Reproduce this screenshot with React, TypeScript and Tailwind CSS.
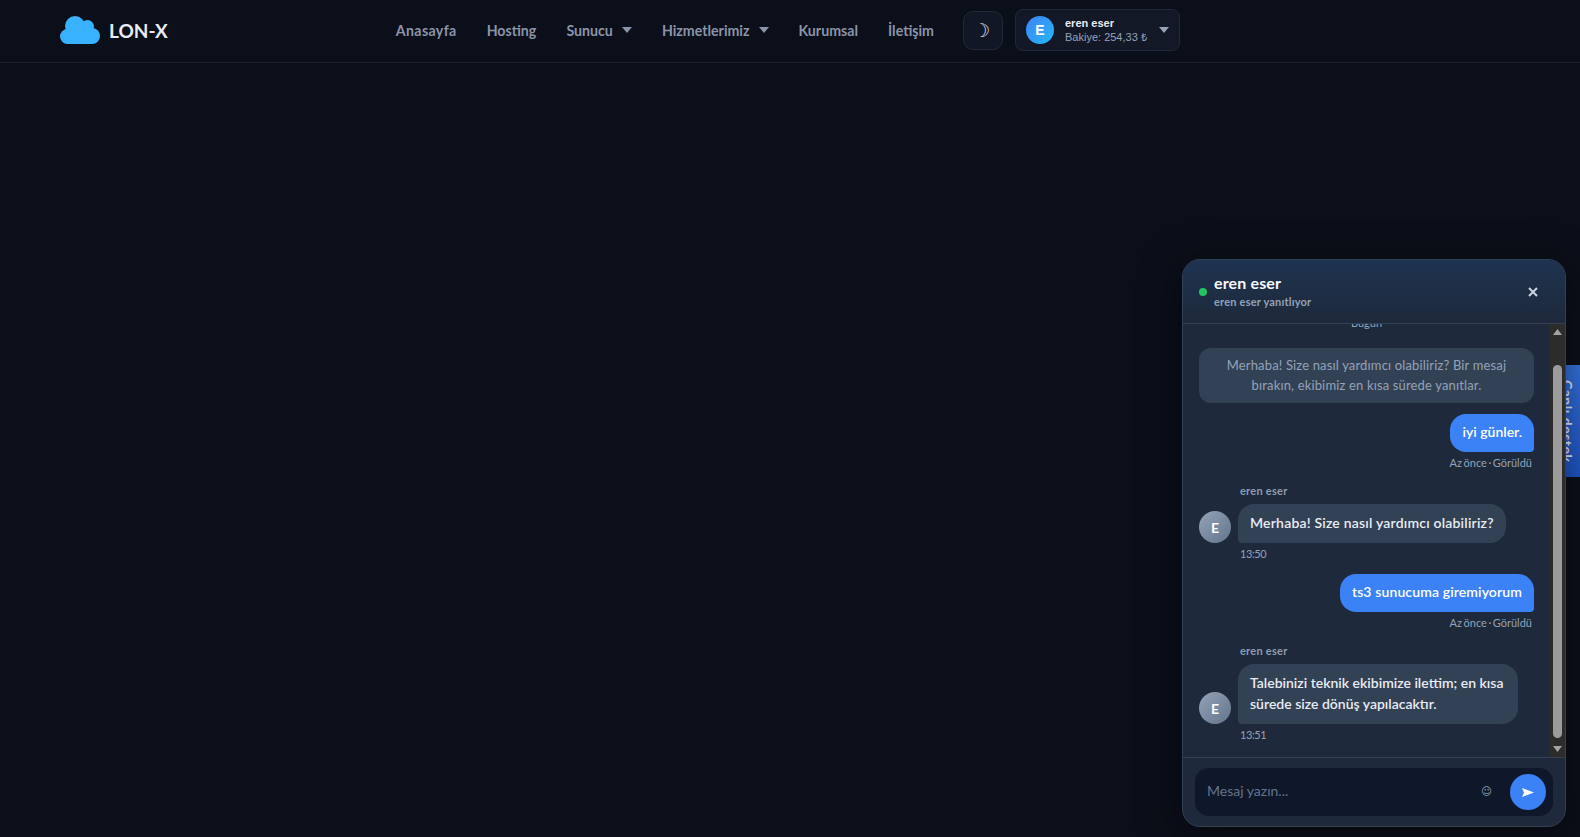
import React from 'react';

const font = "font-['Lato','Noto_Sans',sans-serif]";

function Caret({ className = '' }: { className?: string }) {
  return (
    <svg className={className} width="10" height="6" viewBox="0 0 10 6">
      <path d="M0 0h10L5 6z" fill="currentColor" />
    </svg>
  );
}

function CloudLogo() {
  return (
    <svg width="40" height="28" viewBox="0 0 40 28" fill="#38b2fe">
      <circle cx="15" cy="10" r="10" />
      <circle cx="27.5" cy="10.5" r="6.5" />
      <circle cx="7.5" cy="20.5" r="7.5" />
      <circle cx="32" cy="20" r="8" />
      <rect x="7" y="12" width="25" height="16" />
    </svg>
  );
}

const NAV = [
  { label: 'Anasayfa', spacing: 'tracking-[0.35px]' },
  { label: 'Hosting' },
  { label: 'Sunucu', caret: true },
  { label: 'Hizmetlerimiz', caret: true },
  { label: 'Kurumsal' },
  { label: 'İletişim' },
];

function Header() {
  return (
    <header className="h-[63px] border-b border-[#1b1f2a] bg-[#0b0f19]">
      <div className="flex h-[60px] w-[1180px] items-center justify-between pl-[60px]">
        <div className="flex items-center gap-[9px]">
          <CloudLogo />
          <span className="text-[19px] font-bold leading-none text-[#e8ecf4]">LON-X</span>
        </div>
        <div className="flex items-center">
          <nav className="flex items-center gap-[30px] pt-[1px] text-[14.2px] font-bold text-[#8a94a8]">
            {NAV.map((item) => (
              <span key={item.label} className={`flex items-center gap-[9px] ${item.spacing ?? ''}`}>
                {item.label}
                {item.caret && <Caret />}
              </span>
            ))}
          </nav>
          <button className="ml-[29px] flex h-[39px] w-[40px] items-center justify-center rounded-[10px] border border-[#232838] bg-[#121725] pr-[3px] font-['DejaVu_Sans'] text-[19px] text-[#d8dce4]">
            ☽
          </button>
          <button className="ml-[12px] flex h-[42px] w-[165px] items-center rounded-[8px] border border-[#232838] bg-[#131826] pl-[10px] pr-[10px] text-left font-['Liberation_Sans',sans-serif]">
            <span className="flex h-[28px] w-[28px] items-center justify-center rounded-full bg-gradient-to-br from-[#3b82f6] to-[#22b8f5] text-[14px] font-bold text-white">
              E
            </span>
            <span className="ml-[11px] flex flex-col leading-[14px]">
              <span className="text-[11px] font-bold text-[#e8ecf4]">eren eser</span>
              <span className="text-[11px] text-[#94a3b8]">Bakiye: 254,33 ₺</span>
            </span>
            <Caret className="ml-auto text-[#94a3b8]" />
          </button>
        </div>
      </div>
    </header>
  );
}

function Avatar() {
  return (
    <div className="flex h-[32px] w-[32px] shrink-0 items-center justify-center rounded-full bg-gradient-to-br from-[#94a3b8] to-[#64748b] text-[14px] font-bold text-white">
      E
    </div>
  );
}

function Mine({ text, spacing = '' }: { text: string; spacing?: string }) {
  return (
    <div className="mb-[15px] flex flex-col items-end">
      <div className={`${spacing} whitespace-nowrap rounded-[16px] rounded-br-[4px] bg-[#3b82f6] px-[12px] pb-[10px] pt-[8px] text-[14px] font-semibold leading-[20px] text-white`}>
        {text}
      </div>
      <div className="mt-[4px] pr-[2px] text-[11px] leading-[14px] text-[#94a3b8] [word-spacing:-1.3px]">Az önce · Görüldü</div>
    </div>
  );
}

function Theirs({ lines, time, spacing = 'pr-[12px]' }: { lines: string[]; time: string; spacing?: string }) {
  return (
    <div className="mb-[13px] flex flex-col">
      <div className="ml-[41px] -translate-y-[1px] text-[11px] font-bold leading-[14px] tracking-[0.25px] text-[#8f9bb0]">eren eser</div>
      <div className="mt-[5px] flex items-end gap-[7px]">
        <Avatar />
        <div className={`${spacing} rounded-[16px] rounded-bl-[4px] bg-[#334155] pb-[10px] pl-[12px] pt-[8px] text-[14px] font-semibold leading-[21px] text-[#e8ecf4]`}>
          {lines.map((l) => (
            <div key={l} className="whitespace-nowrap">{l}</div>
          ))}
        </div>
      </div>
      <div className="ml-[41px] mt-[4px] text-[11px] leading-[14px] tracking-[-0.4px] text-[#94a3b8]">{time}</div>
    </div>
  );
}

function Scrollbar() {
  return (
    <div className="flex w-[15px] shrink-0 flex-col items-center bg-[#2c2c2c] py-[5px]">
      <svg width="9" height="6" viewBox="0 0 9 6" fill="#a3a3a3"><path d="M4.5 0L9 6H0z" /></svg>
      <div className="mb-[8px] mt-[30px] w-[9px] flex-1 rounded-full bg-[#9c9c9c]" />
      <svg width="9" height="6" viewBox="0 0 9 6" fill="#a3a3a3"><path d="M0 0h9L4.500 6z" /></svg>
    </div>
  );
}

function ChatPanel() {
  return (
    <aside className="absolute bottom-[10px] right-[14px] z-10 flex h-[568px] w-[384px] flex-col overflow-hidden rounded-[18px] border border-[#334155] bg-[#1e293b] shadow-[0_10px_40px_rgba(0,0,0,0.5)]">
      <div className="flex h-[64px] shrink-0 items-center border-b border-[#334155] bg-gradient-to-b from-[#1e3350] to-[#1e293b] pl-[16px] pr-[27px]">
        <span className="h-[8px] w-[8px] rounded-full bg-[#22c55e]" />
        <div className="ml-[7px] flex flex-col">
          <span className="text-[16px] font-bold leading-[18px] tracking-[0.15px] text-[#f8fafc]">eren eser</span>
          <span className="mt-[3px] text-[11px] font-bold leading-[14px] tracking-[0.2px] text-[#94a3b8]">eren eser yanıtlıyor</span>
        </div>
        <svg className="ml-auto" width="10" height="10" viewBox="0 0 10 10" stroke="#cbd5e1" strokeWidth="2">
          <path d="M1 1l8 8M9 1l-8 8" />
        </svg>
      </div>
      <div className="flex min-h-0 flex-1">
        <div className="min-w-0 flex-1 overflow-hidden pl-[16px] pr-[16px]">
          <div className="-mt-[8px] text-center text-[11px] leading-[14px] text-[#94a3b8]">Bugün</div>
          <div className="mb-[11px] mt-[18px] rounded-[12px] bg-[#334155] px-[12px] py-[8px] text-center text-[13px] leading-[19.5px] tracking-[0.15px] text-[#94a3b8]">
            Merhaba! Size nasıl yardımcı olabiliriz? Bir mesaj bırakın, ekibimiz en kısa sürede yanıtlar.
          </div>
          <Mine text="iyi günler." />
          <Theirs lines={['Merhaba! Size nasıl yardımcı olabiliriz?']} time="13:50" spacing="pr-[12px] tracking-[0.2px]" />
          <Mine text="ts3 sunucuma giremiyorum" spacing="tracking-[0.12px]" />
          <Theirs lines={['Talebinizi teknik ekibimize ilettim; en kısa', 'sürede size dönüş yapılacaktır.']} time="13:51" spacing="pr-[15px]" />
        </div>
        <Scrollbar />
      </div>
      <div className="shrink-0 border-t border-[#334155] px-[12px] pb-[10px] pt-[10px]">
        <div className="flex h-[48px] items-center rounded-[14px] bg-[#0f172a] pl-[12px] pr-[7px]">
          <span className="pb-[4px] text-[14px] text-[#64748b]">Mesaj yazın...</span>
          <span className="ml-auto font-['DejaVu_Sans'] text-[10.5px] text-[#94a3b8]">☺</span>
          <span className="ml-[18px] flex h-[36px] w-[36px] items-center justify-center rounded-full bg-[#3b82f6]">
            <svg width="12" height="9" viewBox="0 0 12 9" fill="#fff"><path d="M0 0l12 4.500L0 9l2-4.500z" /></svg>
          </span>
        </div>
      </div>
    </aside>
  );
}

function SupportTab() {
  return (
    <div className="absolute right-0 top-[365px] flex h-[112px] w-[26px] items-center justify-center rounded-l-[8px] bg-gradient-to-b from-[#3474e0] to-[#1f55c8]">
      <span className="text-[14px] font-bold tracking-[0.5px] text-[#e8f0fe] [writing-mode:vertical-rl]">Canlı destek</span>
    </div>
  );
}

export default function App() {
  return (
    <div className={`relative h-[837px] w-[1580px] overflow-hidden bg-[#0b0f19] ${font}`}>
      <Header />
      <SupportTab />
      <ChatPanel />
    </div>
  );
}
